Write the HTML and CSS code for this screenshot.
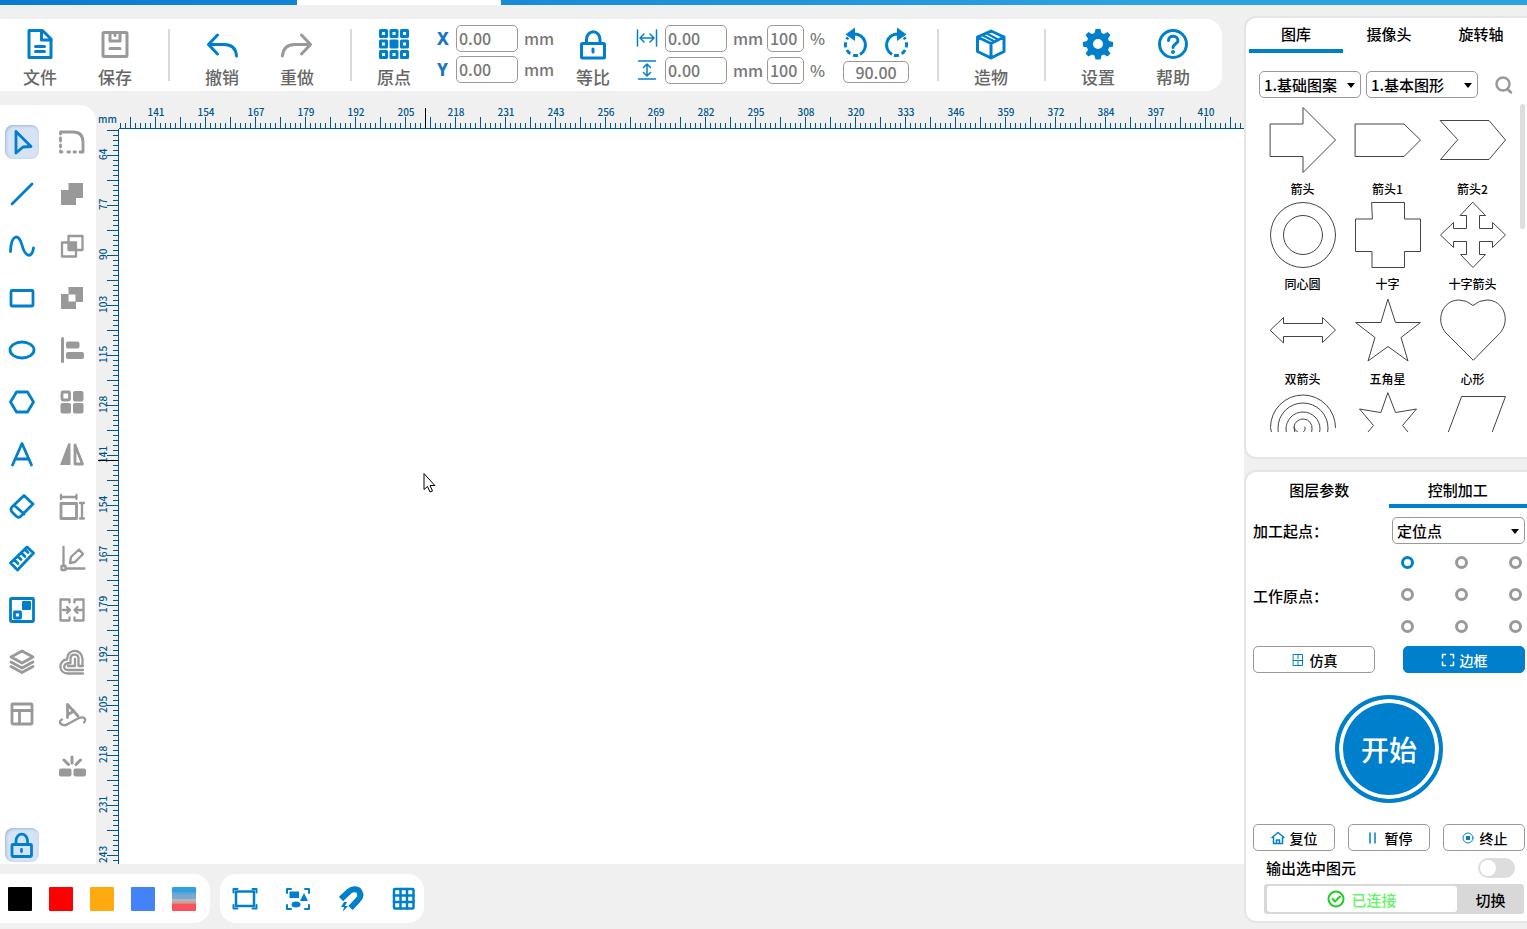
FILE: index.html
```html
<!DOCTYPE html>
<html lang="zh-CN">
<head>
<meta charset="utf-8">
<title>激光雕刻</title>
<link rel="stylesheet" href="styles.css">
</head>
<body>
<div class="tabstrip"><span class="tabstrip-active"></span></div>
<div class="app">
<main class="main">
  <header class="toolbar">
    <div class="group">
      <button class="tool"><svg viewBox="0 0 32 32"><path class="s3" d="M6 2.500H18.500L27 11V29.500H5V2.500Z"/><path class="s3" d="M17.500 3V12H27"/><path class="s3" d="M11.500 18.500H20.500M11.500 23.500H20.500"/></svg><span>文件</span></button>
      <button class="tool muted"><svg viewBox="0 0 32 32"><rect class="s3" x="4" y="4.500" width="24" height="24" rx="1"/><path class="s3" d="M11 5V13H21V5"/><path class="s3" d="M16 5V7.500M11 20.500H21"/></svg><span>保存</span></button>
    </div>
    <span class="sep"></span>
    <div class="group">
      <button class="tool"><svg viewBox="0 0 32 32"><path class="s3" d="M11.500 7L2.500 16.500L11.500 26M3 16.500H18C26 16.500 30 21 30.500 28"/></svg><span>撤销</span></button>
      <button class="tool muted"><svg viewBox="0 0 32 32"><path class="s3" d="M20.500 7L29.500 16.500L20.500 26M29 16.500H14C6 16.500 2 21 1.500 28"/></svg><span>重做</span></button>
    </div>
    <span class="sep sep-near"></span>
    <button class="tool"><svg viewBox="0 0 32 32"><g class="s3"><rect x="2.500" y="2.500" width="6" height="6"/><rect x="13" y="2.500" width="6" height="6"/><rect x="23.500" y="2.500" width="6" height="6"/><rect x="2.500" y="13" width="6" height="6"/><rect class="fill" x="13" y="13" width="6" height="6"/><rect x="23.500" y="13" width="6" height="6"/><rect x="2.500" y="23.500" width="6" height="6"/><rect x="13" y="23.500" width="6" height="6"/><rect x="23.500" y="23.500" width="6" height="6"/></g></svg><span>原点</span></button>
    <div class="fields position">
      <label class="axis" for="px">X</label><input id="px" value="0.00"><span>mm</span>
      <label class="axis" for="py">Y</label><input id="py" value="0.00"><span>mm</span>
    </div>
    <button class="tool"><svg viewBox="0 0 32 32"><rect class="s3" x="4.500" y="15.500" width="23" height="14.500" rx="1"/><path class="s3" d="M9.500 15V11.500A6.500 7.500 0 0 1 23 11.500V15M16 21V24"/></svg><span>等比</span></button>
    <div class="fields size">
      <label for="sw" aria-label="宽"><svg viewBox="0 0 22 20"><path class="s15" d="M1.500 2V18M20.500 2V18M4.500 10H17.500M8 6L4 10L8 14M14 6L18 10L14 14"/></svg></label><input id="sw" value="0.00"><span>mm</span><input aria-label="宽度百分比" value="100"><span>%</span>
      <label for="sh" aria-label="高"><svg viewBox="0 0 22 20"><path class="s15" d="M2.500 1H19.500M2.500 19H19.500M11 4V16M7.500 7.500L11 4L14.500 7.500M7.500 12.500L11 16L14.500 12.500"/></svg></label><input id="sh" value="0.00"><span>mm</span><input aria-label="高度百分比" value="100"><span>%</span>
    </div>
    <div class="rotate">
      <button aria-label="逆时针旋转"><svg viewBox="0 0 32 32"><path class="s3 flat" d="M13 7A11 11 0 0 1 19 27.500"/><path class="s3 flat dash" d="M17 28.500A11 11 0 0 1 7 10.500"/><path class="fill" d="M4.500 7.500L14 0.500V14Z"/></svg></button>
      <button aria-label="顺时针旋转"><svg viewBox="0 0 32 32"><path class="s3 flat" d="M19 7A11 11 0 0 0 13 27.500"/><path class="s3 flat dash" d="M15 28.500A11 11 0 0 0 25 10.500"/><path class="fill" d="M27.500 7.500L18 0.500V14Z"/></svg></button>
      <input aria-label="旋转角度" value="90.00">
    </div>
    <span class="sep"></span>
    <button class="tool"><svg viewBox="0 0 32 32"><path class="s3" d="M16 3L29 9V23.500L16 30L2.500 23.500V9ZM2.500 9L16 15.500L29 9M16 15.500V30"/><path class="s2" d="M12 5.500L22 11M8 7.500L18.500 13"/></svg><span>造物</span></button>
    <span class="sep"></span>
    <div class="group">
      <button class="tool"><svg viewBox="0 0 32 32"><path class="fill" fill-rule="evenodd" d="M12.500 5L13.500 1H18.500L19.500 5L22 6L25.500 4L28.500 7L26 10.500L27 13L31 14V18.500L27 19.500L26 22L28.500 25.500L25.500 28.500L22 26.500L19.500 27.500L18.500 31.500H13.500L12.500 27.500L10 26.500L6.500 28.500L3.500 25.500L6 22L5 19.500L1 18.500V14L5 13L6 10.500L3.500 7L6.500 4L10 6ZM16 11A5 5 0 1 0 16 21A5 5 0 1 0 16 11Z"/></svg><span>设置</span></button>
      <button class="tool"><svg viewBox="0 0 32 32"><circle class="s3" cx="16" cy="16" r="13.500"/><path class="s3" d="M11.500 12.500C11.500 6.500 21 7 21 12.500C21 15.500 16 16 16 19.500"/><circle class="fill" cx="16" cy="24" r="2"/></svg><span>帮助</span></button>
    </div>
  </header>

  <div class="workspace">
    <nav class="palette">
      <div class="palette-grid">
        <button class="pick on" aria-label="选择"><svg viewBox="0 0 30 30"><path class="s25" d="M9 4.500L24 19.500L16 20L9 26Z"/></svg></button>
        <button class="pick muted" aria-label="圆角"><svg viewBox="0 0 30 30"><path class="s25" d="M3.500 7V5H16Q26 5 26 15V25H23M3.500 11V14M3.500 18V20M3.500 24V25H5M11 25H12.500M17 25H18.500"/></svg></button>
        <button class="pick" aria-label="直线"><svg viewBox="0 0 30 30"><path class="s25" d="M5 25L25 5"/></svg></button>
        <button class="pick muted" aria-label="并集"><svg viewBox="0 0 30 30"><path class="fill" d="M11.500 4H26V19H19V26H4V11H11.500Z"/></svg></button>
        <button class="pick" aria-label="曲线"><svg viewBox="0 0 30 30"><path class="s25" d="M3.500 20.500C4 3 12 2 15 14S25 28 26.500 17"/></svg></button>
        <button class="pick muted" aria-label="交集"><svg viewBox="0 0 30 30"><rect class="s2" x="11.500" y="5" width="14" height="14"/><rect class="s2" x="5" y="11.500" width="14" height="14"/><rect class="fill" x="11" y="11" width="9" height="9"/></svg></button>
        <button class="pick" aria-label="矩形"><svg viewBox="0 0 30 30"><rect class="s25" x="4" y="7.500" width="22" height="15.500" rx="1"/></svg></button>
        <button class="pick muted" aria-label="差集"><svg viewBox="0 0 30 30"><path class="fill" fill-rule="evenodd" d="M11.500 4H26V19H19V26H4V11H11.500ZM11.500 11.500V18.500H18.500V11.500Z"/></svg></button>
        <button class="pick" aria-label="椭圆"><svg viewBox="0 0 30 30"><ellipse class="s25" cx="15" cy="15" rx="12" ry="8"/></svg></button>
        <button class="pick muted" aria-label="对齐"><svg viewBox="0 0 30 30"><path class="s3" d="M5.500 3.500V26.500"/><rect class="fill" x="9" y="6.500" width="13.500" height="7" rx="2"/><rect class="fill" x="9" y="17" width="18" height="7" rx="2"/></svg></button>
        <button class="pick" aria-label="多边形"><svg viewBox="0 0 30 30"><path class="s25" d="M9.500 5H20.500L26.500 15L20.500 25H9.500L3.500 15Z"/></svg></button>
        <button class="pick muted" aria-label="阵列"><svg viewBox="0 0 30 30"><rect class="s25" x="5" y="5" width="7.500" height="8" rx="1"/><rect class="fill" x="16" y="4" width="10.500" height="10.500" rx="2"/><rect class="fill" x="3.500" y="16" width="10.500" height="10.500" rx="2"/><rect class="fill" x="16" y="16" width="10.500" height="10.500" rx="2"/></svg></button>
        <button class="pick" aria-label="文字"><svg viewBox="0 0 30 30"><path class="s25" d="M5.500 26L15 4.500L24.500 26M8.500 20H21.500"/></svg></button>
        <button class="pick muted" aria-label="镜像"><svg viewBox="0 0 30 30"><path class="fill" d="M3 26L11 5Q11.500 4 13.500 4.500V26Z"/><path class="s25" d="M18 6L25.500 25H18Z"/></svg></button>
        <button class="pick" aria-label="橡皮擦"><svg viewBox="0 0 30 30"><path class="s25" d="M17 4.500L26 13L15 24Q12 28 9 25L5 21Q3 18 5 16ZM7.500 14.500L17 23"/></svg></button>
        <button class="pick muted" aria-label="尺寸"><svg viewBox="0 0 30 30"><rect class="s25" x="4" y="12.500" width="15.500" height="15"/><path class="s2" d="M4 4V8M19.500 4V8M4 6H19.500M23 12H27M23 27.500H27M25 12V27"/></svg></button>
        <button class="pick" aria-label="测量"><svg viewBox="0 0 30 30"><path class="s25" d="M20 4L26.500 10L10.500 27L3.500 20ZM7.500 17L11 20.500M11 13.500L14 16.500M14.500 10L18 13.500M18 6.500L21 9.500"/></svg></button>
        <button class="pick muted" aria-label="编辑"><svg viewBox="0 0 30 30"><path class="s2" d="M6.500 4V23M9 25.500H27.500M13 20L14 14L22 6.500L26 11L18 19Z"/><rect class="s2" x="4.500" y="23" width="4" height="4"/></svg></button>
        <button class="pick" aria-label="位图"><svg viewBox="0 0 30 30"><rect class="s25" x="3.500" y="3.500" width="23" height="23" rx="1"/><rect class="fill" x="15" y="6" width="9" height="9" rx="1"/><rect class="s25" x="7.500" y="17" width="6" height="6"/></svg></button>
        <button class="pick muted" aria-label="合并"><svg viewBox="0 0 30 30"><path class="s2" d="M12.500 7.500V4.500H3.500V25.500H12.500V22.500M17.500 7.500V4.500H26.500V25.500H17.500V22.500M6 15H12.500M10 12L13 15L10 18M25 15H18M20.500 12L17.500 15L20.500 18"/></svg></button>
        <button class="pick muted" aria-label="图层"><svg viewBox="0 0 30 30"><path class="s25" d="M15 4L26 10L15 16L4 10ZM4 15L15 21L26 15M4 19.500L15 25.500L26 19.500"/></svg></button>
        <button class="pick muted" aria-label="偏移"><svg viewBox="0 0 30 30"><path class="s2" d="M26 26.500H11C1 26.500 1 13 10 12.500C10 1 25 1 25.500 12V19M26 23H11C5 22.500 6 16 13.500 16V11C14 6.500 21 6.500 21.500 11V19H26M18 12V19H11"/></svg></button>
        <button class="pick muted" aria-label="版面"><svg viewBox="0 0 30 30"><rect class="s25" x="5" y="5" width="20" height="20" rx="1"/><path class="s25" d="M5 11.500H25M12.500 11.500V25"/></svg></button>
        <button class="pick muted" aria-label="路径文字"><svg viewBox="0 0 30 30"><path class="s25" d="M10.500 18.500V5.500L21 17M11 15.500L17 12"/><path class="s2" d="M5 20.500C1 22 3 27 9 26L21 19.500C27 16.500 30 20 27 23.500"/></svg></button>
        <span></span>
        <button class="pick muted" aria-label="炸开"><svg viewBox="0 0 30 30"><rect class="fill" x="2" y="17.500" width="12.500" height="8" rx="2"/><rect class="fill" x="16.500" y="17.500" width="12.500" height="8" rx="2"/><path class="s3" d="M15 6V12M7 9L11.500 13.500M23.500 9L19 13.500"/></svg></button>
      </div>
      <button class="pick on" aria-label="锁定"><svg viewBox="0 0 30 30"><rect class="s25" x="5" y="14.500" width="19.500" height="12" rx="1"/><path class="s25" d="M9 14V11A5.500 6.500 0 0 1 20.500 11V14M14.500 19.500V21.500"/></svg></button>
    </nav>

    <div class="board">
      <span class="unit">mm</span>
      <div class="ruler-h">
        <span>141</span><span>154</span><span>167</span><span>179</span><span>192</span><span>205</span><span>218</span><span>231</span><span>243</span><span>256</span><span>269</span><span>282</span><span>295</span><span>308</span><span>320</span><span>333</span><span>346</span><span>359</span><span>372</span><span>384</span><span>397</span><span>410</span>
        <i class="mark-h"></i>
      </div>
      <div class="ruler-v">
        <span>64</span><span>77</span><span>90</span><span>103</span><span>115</span><span>128</span><span>141</span><span>154</span><span>167</span><span>179</span><span>192</span><span>205</span><span>218</span><span>231</span><span>243</span>
        <i class="mark-v"></i>
      </div>
      <div class="canvas">
        <svg class="cursor" viewBox="0 0 13 20"><path d="M1 1V16.500L4.500 13.500L7 19L9.500 18L7 12.500H11.500Z"/></svg>
      </div>
    </div>
  </div>

  <footer class="bottom">
    <div class="swatches">
      <button class="swatch black" aria-label="黑"></button><button class="swatch red" aria-label="红"></button><button class="swatch amber" aria-label="橙"></button><button class="swatch blue" aria-label="蓝"></button><button class="swatch multi" aria-label="多色"></button>
    </div>
    <div class="views">
      <button aria-label="画布"><svg viewBox="0 0 30 30"><rect class="s25" x="6" y="7.500" width="18" height="14.500"/><path class="s2" d="M3.500 8.500V5H7.500M22.500 5H26.500V8.500M3.500 21V24.500H7.500M22.500 24.500H26.500V21"/></svg></button>
      <button aria-label="选中"><svg viewBox="0 0 30 30"><path class="s2" d="M4 9V5H8M22 5H26V9M4 21V25H8M22 25H26V21"/><rect class="fill" x="6.500" y="7.500" width="9.500" height="6.500"/><path class="fill" d="M17 17L21 9L25 17Z"/><ellipse class="fill" cx="13" cy="20.500" rx="4.500" ry="3"/></svg></button>
      <button aria-label="吸附"><svg viewBox="0 0 30 30"><path class="s6" d="M5 15L13 7.500C17 4 22 5 23.500 8C25.500 11.500 24 14 22 16L14.500 24"/><path class="fill" d="M8 18L5 23H8L7 27.500L12 22H9L11 18Z"/></svg></button>
      <button aria-label="网格"><svg viewBox="0 0 30 30"><rect class="s25" x="5" y="5" width="19.500" height="19.500" rx="1"/><path class="s25" d="M5 11.500H24.500M5 18H24.500M11.500 5V24.500M18 5V24.500"/></svg></button>
    </div>
  </footer>
</main>

<aside class="side">
  <section class="panel library">
    <div class="tabs"><button class="tab current">图库</button><button class="tab">摄像头</button><button class="tab">旋转轴</button></div>
    <div class="filters">
      <span class="drop"><select aria-label="图案分类"><option>1.基础图案</option></select></span>
      <span class="drop"><select aria-label="图形分类"><option>1.基本图形</option></select></span>
      <button class="search" aria-label="搜索"><svg viewBox="0 0 20 20"><circle class="s25" cx="9" cy="9" r="6.500"/><path class="s25" d="M14 14.500L17 17.500"/></svg></button>
    </div>
    <div class="scroller">
      <div class="shapes">
        <figure><svg viewBox="0 0 68 68"><path d="M1.500 18H34V1.500L66.500 34L34 66.500V50.500H1.500Z"/></svg><figcaption>箭头</figcaption></figure>
        <figure><svg viewBox="0 0 68 68"><path d="M1.500 18H50L66.500 34L50 50.500H1.500Z"/></svg><figcaption>箭头1</figcaption></figure>
        <figure><svg viewBox="0 0 68 68"><path d="M1.500 14.500H50L66.500 34L50 53.500H1.500L18.500 34Z"/></svg><figcaption>箭头2</figcaption></figure>
        <figure><svg viewBox="0 0 68 68"><circle cx="34" cy="34" r="32.500"/><circle cx="34" cy="34" r="19.500"/></svg><figcaption>同心圆</figcaption></figure>
        <figure><svg viewBox="0 0 68 68"><path d="M18 1.500H50.500V18H66.500V50.500H50.500V66.500H18V50.500H1.500V18H18Z"/></svg><figcaption>十字</figcaption></figure>
        <figure><svg viewBox="0 0 68 68"><path d="M34 1.500L46.500 14.500H40.500V27.500H53.500V21.500L66.500 34L53.500 46.500V40.500H40.500V53.500H46.500L34 66.500L21.500 53.500H27.500V40.500H14.500V46.500L1.500 34L14.500 21.500V27.500H27.500V14.500H21.500Z"/></svg><figcaption>十字箭头</figcaption></figure>
        <figure><svg viewBox="0 0 68 68"><path d="M1.500 34L14.500 21.500V27.500H53.500V21.500L66.500 34L53.500 46.500V40.500H14.500V46.500Z"/></svg><figcaption>双箭头</figcaption></figure>
        <figure><svg viewBox="0 0 68 68"><path d="M34 3.500L41.500 26.500H66.500L47 41.500L54 65L34 50.500L14 65L21 41.500L1.500 26.500H26.500Z"/></svg><figcaption>五角星</figcaption></figure>
        <figure><svg viewBox="0 0 68 68"><path d="M34 64L7 37C-4 25 3 4 20 4Q28 4 34 9.500Q40 4 48 4C65 4 72 25 61 37Z"/></svg><figcaption>心形</figcaption></figure>
        <figure aria-label="螺旋"><svg viewBox="0 0 68 68"><path d="M66.500 36.500A32.500 32.500 0 0 0 1.500 36.500Q2 44 6 50M10 48Q9 42 9 37A25 25 0 0 1 59 37Q59 43 57 48M19 48Q17 43 17 38A17 17 0 0 1 51 38Q51 44 48 49M28 46Q25 42 25 36A9 9 0 0 1 43 38Q43 44 38 47M25 36Q27 42 32 42Q37 41 36 36"/></svg></figure>
        <figure aria-label="六角星"><svg viewBox="0 0 68 68"><path d="M34 2L41.500 21.500L62.500 18L48.500 34.500L62.500 51L41.500 47.500L34 67L26.500 47.500L5.500 51L19.500 34.500L5.500 18L26.500 21.500Z"/></svg></figure>
        <figure aria-label="平行四边形"><svg viewBox="0 0 68 68"><path d="M23 5.500H66.500L45 63H1.500Z"/></svg></figure>
      </div>
      <span class="thumb"></span>
    </div>
  </section>

  <section class="panel control">
    <div class="tabs two"><button class="tab">图层参数</button><button class="tab current">控制加工</button></div>
    <div class="control-body">
      <div class="row start-row"><label for="origin">加工起点：</label><span class="drop"><select id="origin"><option>定位点</option></select></span></div>
      <div class="row"><span>工作原点：</span>
        <div class="anchors" role="radiogroup" aria-label="工作原点">
          <input type="radio" name="o" aria-label="左上" checked><input type="radio" name="o" aria-label="上"><input type="radio" name="o" aria-label="右上"><input type="radio" name="o" aria-label="左"><input type="radio" name="o" aria-label="中"><input type="radio" name="o" aria-label="右"><input type="radio" name="o" aria-label="左下"><input type="radio" name="o" aria-label="下"><input type="radio" name="o" aria-label="右下">
        </div>
      </div>
      <div class="pair">
        <button class="btn"><svg viewBox="0 0 14 14"><path class="s1" d="M2.500 1.500H11.500V12.500H2.500ZM7 1.500V5.500M7 8.500V12.500M2.500 7.500H11.500"/></svg>仿真</button>
        <button class="btn primary"><svg viewBox="0 0 14 14"><path class="s15" d="M1.500 5V1.500H4.500M9.500 1.500H12.500V5M1.500 9V12.500H4.500M9.500 12.500H12.500V9"/></svg>边框</button>
      </div>
      <button class="go">开始</button>
      <div class="triple">
        <button class="btn"><svg viewBox="0 0 14 14"><path class="s15" d="M1 6.500L7 1.500L13 6.500M2.500 6V12.500H11.500V6M5.500 12V9H8.500V12"/></svg>复位</button>
        <button class="btn"><svg viewBox="0 0 14 14"><path class="s15" d="M4 2V12M9 2V12"/></svg>暂停</button>
        <button class="btn"><svg viewBox="0 0 14 14"><circle class="s1" cx="7" cy="7" r="5"/><rect class="fill" x="5" y="5" width="4" height="4"/></svg>终止</button>
      </div>
      <div class="export"><label for="sel">输出选中图元</label><input id="sel" type="checkbox" class="switch"></div>
      <div class="link">
        <span class="status"><svg viewBox="0 0 18 18"><circle class="s2" cx="9" cy="9" r="7.500"/><path class="s2" d="M5.500 9L8 11.500L13 6.500"/></svg>已连接</span>
        <button class="switch-device">切换</button>
      </div>
    </div>
  </section>
</aside>
</div>
</body>
</html>
```

FILE: styles.css
```css
* { box-sizing: border-box; }
body {
  margin: 0;
  height: 100vh;
  display: flex;
  flex-direction: column;
  overflow: hidden;
  background: #f0f0f0;
  color: #000;
  font-family: "Noto Sans CJK SC", sans-serif;
  font-weight: 500;
  font-size: 15px;
  --blue: #0080cc;
  --gray: #999;
  --ruler: #00568a;
}
button, input, select { font: inherit; color: inherit; margin: 0; padding: 0; }
button { background: none; border: 0; display: flex; align-items: center; justify-content: center; }
svg { display: block; color: var(--blue); fill: none; stroke-linejoin: round; stroke-linecap: round; }
.muted svg { color: var(--gray); }
.fill { fill: currentColor; }
.s1, .s15, .s2, .s25, .s3, .s6 { stroke: currentColor; }
.s1 { stroke-width: 1; }
.s15 { stroke-width: 1.5; }
.s2 { stroke-width: 2; }
.s25 { stroke-width: 2.5; }
.s3 { stroke-width: 3; }
.s6 { stroke-width: 6; stroke-linecap: butt; }
.pick .s25 { stroke-width: 2.8; }
.pick .s2 { stroke-width: 2.3; }
.flat { stroke-linecap: butt; }
.dash { stroke-dasharray: 5 3; }

.tabstrip { height: 5px; padding-left: 297px; background: linear-gradient(90deg, #0a7bd0, #1a8bd8 35%, #2aa2e0 75%, #2aa2e0); }
.tabstrip-active { display: block; width: 204px; height: 5px; background: #fff; }
.app { flex: 1; min-height: 0; display: flex; }
.main { flex: 1; min-width: 0; display: flex; flex-direction: column; }

.toolbar {
  height: 72px;
  margin: 14px 22px 14px 0;
  padding-left: 15px;
  display: flex;
  align-items: center;
  background: #fff;
  border-radius: 0 16px 16px 0;
  color: #666;
  font-size: 17px;
}
.group { display: flex; gap: 25px; }
.tool { width: 50px; padding-top: 6px; flex-direction: column; gap: 5px; line-height: 24px; }
.tool svg { width: 32px; height: 32px; }
.sep { width: 2px; height: 52px; margin: 0 27px 0 28px; background: #d9d9d9; }
.sep-near { margin-right: 17px; }
.fields { display: grid; align-items: center; padding-bottom: 2px; row-gap: 4px; font-size: 16px; line-height: 27px; color: #777; }
.fields input, .rotate input { height: 27px; border: 1px solid #999; border-radius: 5px; background: #fff; }
.fields input { width: 100%; padding-left: 2px; }
.position { grid-template-columns: 19px 62px 34px; margin: 0 16px 0 18px; }
.size { grid-template-columns: 29px 62px 40px 37px 22px; margin: 0 17px 0 18px; row-gap: 5px; }
.fields span { padding-left: 6px; }
.fields svg { width: 22px; height: 20px; }
.axis { color: #1a76c2; font: 800 17px "Noto Sans", sans-serif; }
.rotate { display: grid; grid-template-columns: 28px 28px; column-gap: 10px; row-gap: 2px; width: 66px; }
.rotate svg { width: 32px; height: 32px; flex: none; }
.rotate input { grid-column: span 2; width: 66px; height: 22px; text-align: center; font-size: 16px; color: #777; }

.workspace { flex: 1; min-height: 0; display: flex; }
.palette { width: 96px; padding: 20px 7px 2px 5px; background: #fff; border-radius: 0 16px 0 0; display: flex; flex-direction: column; justify-content: space-between; }
.palette-grid { display: grid; grid-template-columns: 34px 34px; column-gap: 16px; row-gap: 18px; }
.pick { width: 34px; height: 34px; border-radius: 8px; }
.pick svg { width: 30px; height: 30px; }
.on { background: #d5e3f4; box-shadow: inset 1px 1px 3px #9db7d8; }

.board { flex: 1; min-width: 0; display: grid; grid-template-columns: 23px 1fr; grid-template-rows: 24px 1fr; color: var(--ruler); font-size: 10px; line-height: 14px; }
.unit { padding: 7px 0 0 2px; }
.ruler-h, .ruler-v { position: relative; overflow: hidden; display: flex; }
.ruler-h {
  padding-left: 12px;
  border-bottom: 1px solid var(--ruler);
  background:
    linear-gradient(90deg, var(--ruler) 1px, transparent 1px) 1px 100% / 5px 5px repeat-x,
    linear-gradient(90deg, var(--ruler) 1px, transparent 1px) 11px 100% / 25px 11px repeat-x;
}
.ruler-h span { flex: 0 0 50px; text-align: center; }
.ruler-v {
  flex-direction: column;
  border-right: 1px solid var(--ruler);
  background:
    linear-gradient(var(--ruler) 1px, transparent 1px) 100% 1px / 5px 5px repeat-y,
    linear-gradient(var(--ruler) 1px, transparent 1px) 100% 1px / 11px 25px repeat-y;
}
.ruler-v span { flex: 0 0 50px; writing-mode: vertical-rl; transform: rotate(180deg); text-align: center; width: 14px; }
.mark-h { position: absolute; left: 306px; top: 3px; width: 1px; height: 20px; background: #000; }
.mark-v { position: absolute; left: 2px; top: 331px; width: 20px; height: 1px; background: #000; }
.canvas { position: relative; background: #fff; }
.cursor { position: absolute; left: 304px; top: 344px; width: 13px; height: 20px; fill: #fff; stroke: #000; stroke-width: 1; stroke-linejoin: miter; }

.bottom { height: 65px; padding: 10px 0 6px; display: flex; gap: 10px; }
.swatches, .views { display: flex; align-items: center; background: #fff; border-radius: 16px; }
.swatches { gap: 17px; padding: 0 14px 0 8px; border-radius: 0 16px 16px 0; }
.swatch { width: 24px; height: 24px; border-radius: 1px; }
.black { background: #000; }
.red { background: #f00; }
.amber { background: #ffab0f; }
.blue { background: #4483f7; }
.multi { background: linear-gradient(#2fa2dd 0 20%, #66a5d6 25% 30%, #7ca7d2 35% 50%, #b0b6c2 50% 58%, #c8a595 60% 68%, #fa5160 70%); }
.views { gap: 23px; padding: 0 5px 0 10px; }
.views svg { width: 30px; height: 30px; }

.side { width: 283px; padding: 11px 0 6px; display: flex; flex-direction: column; gap: 11px; }
.panel { background: #fff; border: 2px solid #e5e5e5; border-right: 0; border-radius: 12px 0 0 12px; }
.library { flex: 0 0 443px; }
.control { flex: 1; }
.tabs { display: grid; grid-template-columns: 94px 1fr 1fr; padding-left: 3px; }
.tab { height: 35px; border-bottom: 4px solid transparent; }
.tabs.two { grid-template-columns: 1fr 1fr; padding-left: 4px; }
.two .tab { height: 36px; padding-top: 2px; }
.current { border-color: var(--blue); }
.filters { display: grid; grid-template-columns: 102px 112px 1fr; gap: 5px; padding: 18px 2px 0 13px; }
.drop { position: relative; display: block; }
.drop::after { content: ""; position: absolute; right: 6px; top: 12px; border: 4px solid transparent; border-top: 5px solid #000; border-bottom: 0; pointer-events: none; }
.drop select { display: block; width: 100%; height: 27px; padding-left: 4px; appearance: none; border: 1px solid #999; border-radius: 5px; background: #fff; }
.search svg { width: 20px; height: 20px; color: var(--gray); }
.scroller { position: relative; height: 328px; margin-top: 6px; padding-left: 14px; overflow: hidden; }
.shapes { display: grid; grid-template-columns: repeat(3, 85px); grid-auto-rows: 95px; }
figure { margin: 0; padding-top: 2px; text-align: center; font-size: 12px; line-height: 14px; }
figure svg { width: 68px; height: 68px; margin: 0 auto 8px; stroke: #444; stroke-width: 1; stroke-linejoin: miter; }
.thumb { position: absolute; right: 2px; top: 0; width: 5px; height: 125px; border-radius: 3px; background: #ddd; }

.control-body { padding: 9px 2px 0 7px; }
.row { display: flex; justify-content: space-between; align-items: center; }
.start-row .drop { width: 133px; }
.anchors { display: grid; grid-template-columns: repeat(3, 13px); column-gap: 41px; row-gap: 19px; padding: 12px 3px 13px 0; }
.anchors input { appearance: none; width: 13px; height: 13px; border: 3px solid var(--gray); border-radius: 50%; }
.anchors input:checked { border-color: var(--blue); }
.pair { display: grid; grid-template-columns: 1fr 1fr; gap: 28px; }
.btn { height: 27px; gap: 5px; border: 1px solid #999; border-radius: 5px; background: #fff; font-size: 14px; }
.btn svg { width: 14px; height: 14px; }
.primary { background: var(--blue); border-color: var(--blue); color: #fff; }
.primary svg { color: #fff; }
.go { width: 108px; height: 108px; margin: 22px auto 21px; border: 4px solid var(--blue); border-radius: 50%; background: var(--blue); box-shadow: inset 0 0 0 4px #fff; color: #fff; font-size: 28px; }
.triple { display: grid; grid-template-columns: repeat(3, 1fr); gap: 13px; }
.export { display: flex; align-items: center; justify-content: space-between; height: 33px; padding: 0 10px 0 13px; }
.switch { appearance: none; display: flex; width: 37px; height: 20px; padding: 2px; border-radius: 10px; background: #ddd; }
.switch::before { content: ""; width: 16px; height: 16px; border-radius: 50%; background: #fff; }
.link { display: grid; grid-template-columns: 190px 1fr; height: 30px; margin: 0 1px 0 11px; padding: 2px 0 2px 3px; border-radius: 3px; background: #d8d8d8; }
.status { display: flex; align-items: center; justify-content: center; gap: 6px; background: #fff; border-radius: 3px; color: #66f466; }
.status svg { width: 18px; height: 18px; color: #1fd01f; }
```
